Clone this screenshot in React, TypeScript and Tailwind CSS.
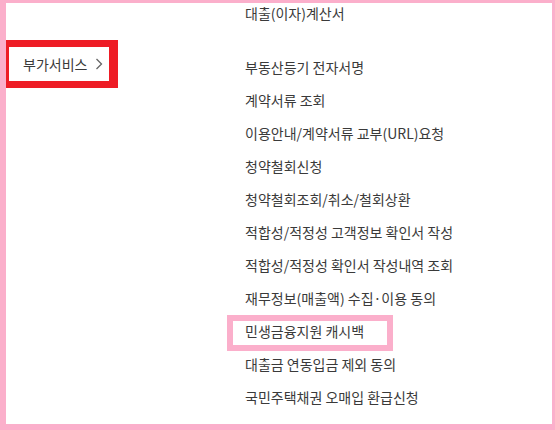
import React from "react";

const items = [
  "부동산등기 전자서명",
  "계약서류 조회",
  "이용안내/계약서류 교부(URL)요청",
  "청약철회신청",
  "청약철회조회/취소/철회상환",
  "적합성/적정성 고객정보 확인서 작성",
  "적합성/적정성 확인서 작성내역 조회",
  "재무정보(매출액) 수집·이용 동의",
  "민생금융지원 캐시백",
  "대출금 연동입금 제외 동의",
  "국민주택채권 오매입 환급신청",
];

const HIGHLIGHT = "민생금융지원 캐시백";

export default function App() {
  return (
    <div
      className="w-[555px] h-[430px] bg-white border-solid border-[#fbafcb] border-t-[3px] border-l-[6px] border-r-[3px] border-b-[6px] flex text-[14px] text-[#3a3a3a]"
      style={{ fontFamily: '"Noto Sans CJK KR", "Noto Sans", sans-serif' }}
    >
      {/* Left: category */}
      <div className="w-[221px] shrink-0">
        <div className="mt-[37px] w-[112px] h-[48px] border-solid border-[#ee1c25] border-t-[7px] border-b-[7px] border-l-[3px] border-r-[9px] flex items-center pl-[14px] gap-[8px]">
          <span className="leading-none">부가서비스</span>
          <svg width="8" height="12" viewBox="0 0 8 12">
            <path d="M1.5 1 L6.5 6 L1.5 11" fill="none" stroke="#666" strokeWidth="1.3" />
          </svg>
        </div>
      </div>

      {/* Right: sub menu */}
      <ul className="flex flex-col">
        <li className="h-[20px] flex items-center pl-[18px]">대출(이자)계산서</li>
        <li className="h-[28px]" />
        {items.map((item) => (
          <li key={item} className="relative h-[33px] flex items-center pl-[18px]">
            {item === HIGHLIGHT && (
              <span className="absolute left-0 top-[0px] w-[166px] h-[36px] border-[6px] border-solid border-[#fbafcb]" />
            )}
            <span className="relative">{item}</span>
          </li>
        ))}
      </ul>
    </div>
  );
}
